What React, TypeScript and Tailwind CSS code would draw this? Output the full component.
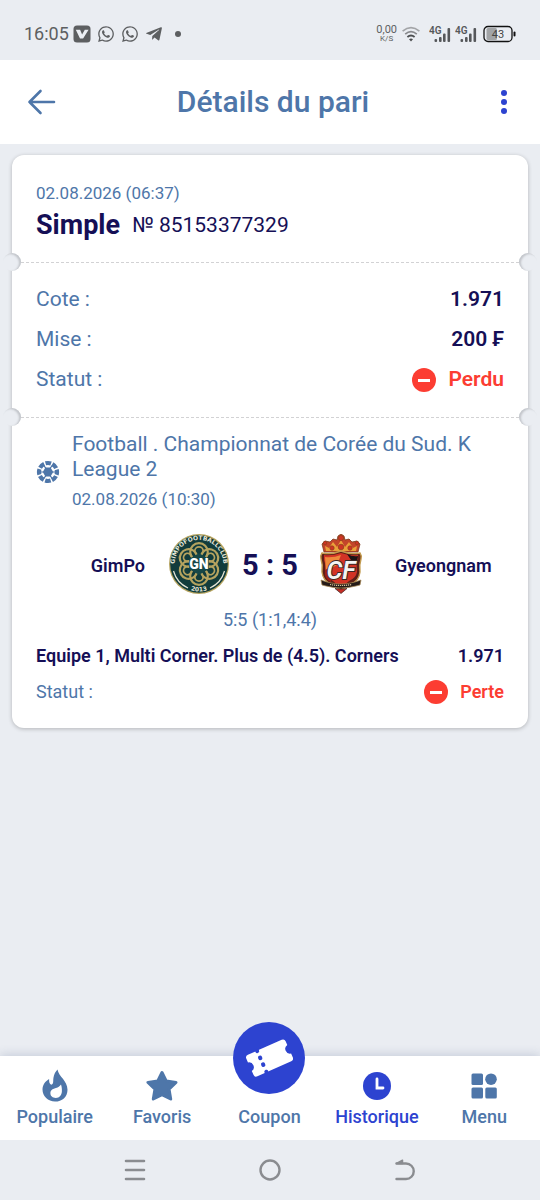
import React from "react";
import { FaWhatsapp, FaTelegramPlane } from "react-icons/fa";

const StatusBar = () => (
  <div className="flex h-[60px] items-center justify-between px-6 pt-2 text-[#5d5f61]">
    <div className="flex items-center">
      <span className="w-[49px] text-lg leading-6">16:05</span>
      <svg width="18" height="18" viewBox="0 0 18 18">
        <rect x="0.5" y="0.5" width="17" height="17" rx="3.5" fill="#5d5f61" />
        <path d="M2.8 4.8h4.3l2 4.6 2.7-4.6h3.8l-5.5 8.6H7z" fill="#eceff4" />
      </svg>
      <FaWhatsapp className="ml-1.5 size-[18px]" />
      <FaWhatsapp className="ml-1.5 size-[18px]" />
      <FaTelegramPlane className="ml-1.5 size-[18px]" />
      <span className="ml-3 size-1.5 rounded-full bg-[#5d5f61]" />
    </div>
    <div className="flex items-center">
      <div className="flex flex-col items-center">
        <span className="text-[11px] leading-[10px]">0,00</span>
        <span className="text-[8px] leading-2">K/S</span>
      </div>
      <svg className="ml-1" width="20" height="16" viewBox="0 0 20 16" fill="none">
        <path d="M1.6 5.2Q10 -1.8 18.4 5.2" stroke="#a3a5a8" strokeWidth="1.7" />
        <path d="M4.2 8.2Q10 3.2 15.8 8.2" stroke="#88898c" strokeWidth="1.7" />
        <path d="M6.4 11Q10 8 13.6 11" stroke="#4c4e50" strokeWidth="1.8" />
        <path d="M8 13.2Q10 11.6 12 13.2L10 15.4z" fill="#4c4e50" />
      </svg>
      <span className="ml-2 flex gap-1">
        <Signal />
        <Signal />
      </span>
      <svg className="ml-1.5" width="33" height="18" viewBox="0 0 33 18">
        <rect x="3.5" y="3" width="10.5" height="12" rx="1.5" fill="#a2a4a6" />
        <rect x="1" y="1.5" width="28" height="15" rx="4" fill="none" stroke="#111" strokeWidth="1.3" />
        <rect x="30.5" y="6.5" width="2" height="5" rx="1" fill="#111" />
        <text x="15" y="13" fontSize="11" textAnchor="middle" fill="#444">
          43
        </text>
      </svg>
    </div>
  </div>
);

const Signal = () => (
  <svg width="22" height="18" viewBox="0 0 22 18" fill="#55575a">
    <text x="0" y="9" fontSize="10" fontWeight="600">
      4G
    </text>
    <rect x="5.5" y="14" width="2.6" height="3" rx="1" />
    <rect x="10" y="12" width="2.6" height="5" rx="1" />
    <rect x="14" y="8.5" width="2.6" height="8.5" rx="1" />
    <rect x="18.5" y="3" width="2.6" height="14" rx="1" />
  </svg>
);

const MinusBadge = () => (
  <span className="flex size-6 items-center justify-center rounded-full bg-[#fc3d32]">
    <span className="h-[3px] w-3 bg-white" />
  </span>
);

const Divider = () => (
  <div className="relative mx-[9px] border-t border-dashed border-[#d2d2d4]">
    <span className="absolute -top-[10px] -left-[18px] size-[18px] rounded-full bg-[#eaedf2] shadow-[inset_-2px_1px_2px_#c3c6cb]" />
    <span className="absolute -top-[10px] -right-[18px] size-[18px] rounded-full bg-[#eaedf2] shadow-[inset_2px_1px_2px_#c3c6cb]" />
  </div>
);

const BallIcon = () => (
  <svg width="24" height="24" viewBox="0 0 24 24">
    <circle cx="12" cy="12" r="9" fill="none" stroke="#4e76a9" strokeWidth="4.2" strokeDasharray="5.6 1.469" strokeDashoffset="2.8" />
    <path d="M9.4 7.500h5.200l2.600 4.500-2.600 4.500H9.400L6.800 12z" fill="#4e76a9" />
    <g stroke="#4e76a9" strokeWidth="1.200">
      <path d="M7.500 12H4M16.500 12H20M9.800 8.100L7.200 4.800M14.200 8.100l2.600-3.300M9.800 15.900l-2.600 3.300M14.200 15.900l2.600 3.300" />
    </g>
  </svg>
);

const GimpoCrest = () => (
  <svg width="60" height="60" viewBox="0 0 60 60">
    <defs>
      <path id="crest-top" d="M8.500 41.500A24.300 24.300 0 1 1 51.500 41.500" />
      <path id="crest-bottom" d="M2.500 30A27.500 27.500 0 0 0 57.500 30" />
    </defs>
    <circle cx="30" cy="30" r="30" fill="#b5a35f" />
    <circle cx="30" cy="30" r="28.800" fill="#123c3c" />
    <g fill="none" stroke="#b5a35f">
      {[0, 60, 120, 180, 240, 300].map((angle) => (
        <g key={angle} transform={`rotate(${angle} 30 30)`}>
          <circle cx="30" cy="18" r="8.800" strokeWidth="2.200" />
          <circle cx="30" cy="17" r="4.200" strokeWidth="1.800" />
        </g>
      ))}
    </g>
    <g fontSize="6" fontWeight="700" fill="#e6e6d8" fontFamily="DejaVu Sans, sans-serif">
      <text>
        <textPath href="#crest-top" startOffset="50%" textAnchor="middle">
          GIMPOFOOTBALLCLUB
        </textPath>
      </text>
      <text>
        <textPath href="#crest-bottom" startOffset="50%" textAnchor="middle">
          2013
        </textPath>
      </text>
    </g>
    <path d="M4.500 37A26.500 26.500 0 0 0 19 54M55.500 37A26.500 26.500 0 0 1 41 54" stroke="#e6e6d8" strokeWidth="1.200" fill="none" />
    <path d="M30 20.500l8.800 4.800v9.400L30 39.500l-8.800-4.800v-9.400z" fill="#174747" stroke="#174747" strokeWidth="2" strokeLinejoin="round" />
    <text x="30" y="35" fontSize="14" fontWeight="900" textAnchor="middle" fill="#fff">
      GN
    </text>
  </svg>
);

const GyeongnamCrest = () => (
  <svg width="60" height="60" viewBox="0 0 60 60">
    <path d="M13 18l-2-8 3-3 5 1 3-3 4 1 1-4 3-2 3 2 1 4 4-1 3 3 5-1 3 3-2 8z" fill="#c4452a" stroke="#7a3a1c" strokeWidth="0.8" />
    <path d="M15 17l-1-5 4 2 4-6 4 5 4-7 4 7 4-5 4 6 4-2-1 5z" fill="#eba13a" />
    <g fill="#cf3325" stroke="#8d3f1a" strokeWidth="0.7">
      <circle cx="30" cy="4" r="2.600" />
      <circle cx="21" cy="14" r="2.200" />
      <circle cx="30" cy="13" r="2.800" />
      <circle cx="39" cy="14" r="2.200" />
      <circle cx="14" cy="9" r="1.800" />
      <circle cx="46" cy="9" r="1.800" />
    </g>
    <path d="M11 19q9 2 19-2 10 4 19 2 2 3 1 6-2 6-1 13-1 9-9 12-6 2-10 7-4-5-10-7-8-3-9-12 1-7-1-13-1-3 1-6z" fill="#5e1f17" stroke="#c29a4e" strokeWidth="1.400" />
    <path d="M13 21q8 1 17-2 9 3 17 2v5q-2 5-1 12-1 6-8 9l-8 7-8-7q-7-3-8-9 1-7-1-12z" fill="#d23325" />
    <path d="M14 23q8 1 16-2l-4 10-11 6z" fill="#ee8a3c" />
    <path d="M36 20q6 3 11 2l-1 7-6-3z" fill="#1b1415" />
    <path d="M14 36l6-3v15q-5-2-6-7z" fill="#9d2019" />
    <text
      x="30"
      y="45"
      fontSize="25"
      fontWeight="600"
      fontStyle="italic"
      textAnchor="middle"
      stroke="#3a2826"
      strokeWidth="1.800"
      paintOrder="stroke"
      fill="#f4f4f4"
    >
      CF
    </text>
    <path d="M10 46l6 2q14 4 28 0l6-2-1 5-4 1q-15 4-30 0l-4-1z" fill="#251b19" stroke="#a78751" strokeWidth="0.7" />
    <path d="M19 50.500q11 2 22 0" stroke="#d7c49a" strokeWidth="1.200" strokeDasharray="1.200 0.800" fill="none" />
    <path d="M24 54.500l6 5 6-5q-6 1-12 0z" fill="#c52e26" stroke="#33201c" strokeWidth="0.7" />
  </svg>
);

const FireIcon = () => (
  <svg width="26" height="33" viewBox="0 0 26 33">
    <path d="M15.5.5c1.2 7.2 10 11 10 20.2C25.500 28 20 32.600 13 32.600S.5 27.500.5 20.600c0-4.800 2.800-8.400 6.600-10.600-.1 3 .3 5 2.300 5.700 2.500-.7 1.500-3.700 2.100-7.200.5-3.300 2-5.800 4-8z" fill="#4e76a9" />
    <path d="M19 15.500c.8 2.500 1 4.500.9 6.800-.2 4-2.600 6.700-6.100 6.700-3.200 0-5.400-2-5.400-4.700 0-3.600 3-4.300 5.600-5.200 2.200-.8 3.600-1.800 5-3.600z" fill="#fff" />
  </svg>
);

const StarIcon = () => (
  <svg width="32" height="32" viewBox="0 0 32 32">
    <path d="M16 2.500l4.300 8.600 9.700 1.300-7 6.700 1.700 9.900L16 24.600 7.300 29 9 19.100l-7-6.700 9.700-1.300z" fill="#4e76a9" stroke="#4e76a9" strokeWidth="3" strokeLinejoin="round" />
  </svg>
);

const ClockIcon = () => (
  <svg width="28" height="28" viewBox="0 0 28 28">
    <circle cx="14" cy="14" r="14" fill="#2d43d0" />
    <path d="M14 7v9h6" fill="none" stroke="#fff" strokeWidth="2.800" strokeLinecap="round" />
  </svg>
);

const MenuIcon = () => (
  <svg width="26" height="26" viewBox="0 0 26 26" fill="#4e76a9">
    <rect x="0.500" y="0.500" width="11.500" height="11.500" rx="1.500" />
    <circle cx="20" cy="6.200" r="5.800" />
    <rect x="0.500" y="14.500" width="11.500" height="11" rx="1.500" />
    <rect x="14.300" y="14.500" width="11.500" height="11" rx="1.500" />
  </svg>
);

const TicketIcon = () => (
  <svg width="48" height="44" viewBox="0 0 48 44">
    <g transform="rotate(-24 24 22)">
      <path d="M6 10.500h37a3 3 0 0 1 3 3v4a4.800 4.800 0 0 0 0 9.400V31a3 3 0 0 1-3 3H6a3 3 0 0 1-3-3v-4.100a4.800 4.800 0 0 0 0-9.400v-4a3 3 0 0 1 3-3z" fill="#fff" />
      <g fill="#2d43d0">
        <rect x="14" y="8.800" width="4" height="4" rx="1.800" />
        <rect x="14" y="16" width="4" height="4.600" rx="1.800" />
        <rect x="14" y="23.400" width="4" height="4.600" rx="1.800" />
        <rect x="14" y="31.500" width="4" height="4" rx="1.800" />
      </g>
    </g>
  </svg>
);

const rows = [
  { label: "Cote :", value: "1.971" },
  { label: "Mise :", value: "200 ₣" },
];

const tabs = [
  { label: "Populaire", icon: <FireIcon /> },
  { label: "Favoris", icon: <StarIcon /> },
  { label: "Coupon", icon: null },
  { label: "Historique", icon: <ClockIcon />, active: true },
  { label: "Menu", icon: <MenuIcon /> },
];

const App = () => {
  return (
    <div className="flex min-h-screen flex-col bg-[#eaedf2] font-[Roboto,sans-serif] text-[#150f56]">
      <StatusBar />

      <header className="flex h-[84px] items-center justify-between bg-white px-6">
        <button aria-label="Retour" className="flex size-9 items-center justify-center">
          <svg width="30" height="26" viewBox="0 0 30 26" fill="none" stroke="#4e76a9" strokeWidth="2.600" strokeLinecap="round" strokeLinejoin="round">
            <path d="M13.500 2L2.500 13l11 11M2.500 13H27" />
          </svg>
        </button>
        <h1 className="pl-1.5 text-[30px] leading-9 font-medium text-[#4e76a9]">Détails du pari</h1>
        <button aria-label="Options" className="flex size-9 items-center justify-end">
          <svg width="24" height="24" viewBox="0 0 24 24" fill="#2d43d0">
            <circle cx="12" cy="3" r="3" />
            <circle cx="12" cy="12" r="3" />
            <circle cx="12" cy="21" r="3" />
          </svg>
        </button>
      </header>

      <main className="flex-1 px-3 pt-[11px] pb-12">
        <article className="rounded-xl bg-white shadow-[0_1px_4px_rgba(0,0,0,0.24)]">
          <section className="px-6 pt-[26px] pb-[21px]">
            <p className="text-[17px] leading-6 text-[#4e76a9]">02.08.2026 (06:37)</p>
            <div className="mt-1 flex items-center gap-3 leading-8">
              <h2 className="text-[27px] font-bold">Simple</h2>
              <span className="text-[21px]">№ 85153377329</span>
            </div>
          </section>

          <Divider />

          <section className="px-6 py-[17px] text-[21px]">
            {rows.map((row) => (
              <div key={row.label} className="flex h-10 items-center justify-between">
                <span className="text-[#4e76a9]">{row.label}</span>
                <span className="font-semibold">{row.value}</span>
              </div>
            ))}
            <div className="flex h-10 items-center justify-between">
              <span className="text-[#4e76a9]">Statut :</span>
              <span className="flex items-center gap-3 font-semibold text-[#fc3d32]">
                <MinusBadge />
                Perdu
              </span>
            </div>
          </section>

          <Divider />

          <section className="px-6 pt-[14px] pb-6">
            <div className="flex items-center gap-3 text-[#4e76a9]">
              <span className="shrink-0">
                <BallIcon />
              </span>
              <div>
                <h3 className="text-[21px] leading-[25px]">Football . Championnat de Corée du Sud. K League 2</h3>
                <p className="mt-[5px] text-[17px] leading-6">02.08.2026 (10:30)</p>
              </div>
            </div>

            <div className="mt-[21px] grid h-16 grid-cols-[1fr_60px_82px_60px_1fr] items-center text-center text-lg font-semibold">
              <span className="pt-1 pr-6 text-right">GimPo</span>
              <GimpoCrest />
              <span className="pt-1 text-[29px] font-bold">5 : 5</span>
              <GyeongnamCrest />
              <span className="pt-1 pl-6 text-left">Gyeongnam</span>
            </div>
            <p className="mt-3 text-center text-[18px] leading-6 text-[#4e76a9]">5:5 (1:1,4:4)</p>

            <div className="mt-3 flex justify-between text-[18px] leading-6 font-semibold">
              <span>Equipe 1, Multi Corner. Plus de (4.5). Corners</span>
              <span>1.971</span>
            </div>
            <div className="mt-3 flex items-center justify-between text-[18px] leading-6">
              <span className="text-[#4e76a9]">Statut :</span>
              <span className="flex items-center gap-3 font-semibold text-[#fc3d32]">
                <MinusBadge />
                Perte
              </span>
            </div>
          </section>
        </article>
      </main>

      <nav className="relative grid h-[84px] grid-cols-5 bg-white pr-0.5 pl-px shadow-[0_-1px_10px_rgba(40,60,110,0.2)]">
        {tabs.map((tab) => (
          <button
            key={tab.label}
            className={`relative flex flex-col items-center justify-start pt-[10px] text-[18px] leading-6 font-medium ${tab.active ? "text-[#2d43d0]" : "text-[#4e76a9]"}`}
          >
            <span className="flex h-[39px] items-center justify-center">{tab.icon}</span>
            {!tab.icon && (
              <span className="absolute -top-[34px] flex size-[72px] items-center justify-center rounded-full bg-[#2d43d0]">
                <TicketIcon />
              </span>
            )}
            {tab.label}
          </button>
        ))}
      </nav>

      <div className="relative flex h-[60px] items-center justify-center gap-[113px] bg-[#eaedf2]">
        <button aria-label="Applications récentes">
          <svg width="22" height="24" viewBox="0 0 22 24" stroke="#8a8c90" strokeWidth="2.600" strokeLinecap="round">
            <path d="M2 3h18M2 12h18M2 21h18" />
          </svg>
        </button>
        <button aria-label="Accueil">
          <svg width="22" height="22" viewBox="0 0 22 22">
            <circle cx="11" cy="11" r="9.500" fill="none" stroke="#8a8c90" strokeWidth="2.400" />
          </svg>
        </button>
        <button aria-label="Précédent">
          <svg width="22" height="24" viewBox="0 0 22 24" fill="none" stroke="#8a8c90" strokeWidth="2.400" strokeLinecap="round" strokeLinejoin="round">
            <path d="M2.500 5.500H12a7.700 7.700 0 0 1 0 15.500H2.500" />
            <path d="M2.500 5.500L8.500 2.200v3.300z" fill="#8a8c90" strokeWidth="1.500" />
          </svg>
        </button>
      </div>
    </div>
  );
};

export default App;
